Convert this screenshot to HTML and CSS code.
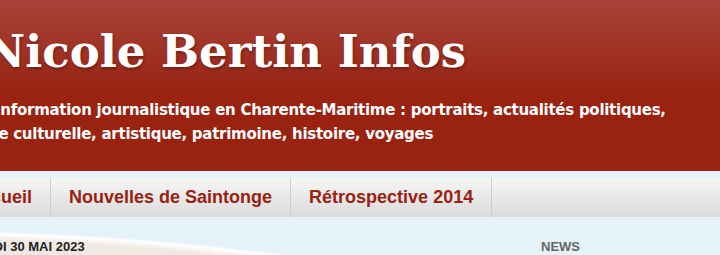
FILE: index.html
```html
<!DOCTYPE html>
<html lang="fr">
<head>
  <meta charset="UTF-8">
  <title>Nicole Bertin Infos</title>
  <link rel="stylesheet" href="styles.css">
</head>
<body>

<div class="page">
  <header class="header">
    <div class="header-inner">
      <h1 class="title">Nicole Bertin Infos</h1>
      <p class="description">Information journalistique en Charente-Maritime : portraits, actualités politiques, vie culturelle, artistique, patrimoine, histoire, voyages</p>
    </div>
  </header>

  <nav class="tabs">
    <ul class="tabs-inner">
      <li><a href="#">Accueil</a></li>
      <li><a href="#">Nouvelles de Saintonge</a></li>
      <li><a href="#">Rétrospective 2014</a></li>
    </ul>
  </nav>

  <div class="content">
    <div class="main">
      <h2 class="date-header">mardi 30 mai 2023</h2>
    </div>
    <aside class="sidebar">
      <h2 class="widget-title">News</h2>
    </aside>
  </div>
</div>

</body>
</html>
```

FILE: styles.css
```css
html, body {
  margin: 0;
}

body {
  background: radial-gradient(ellipse 760px 175px at -100px 405px, #e8e0d9 0, #efe9e4 95%, #ffffff 98.6%, rgba(255, 255, 255, 0) 100%) no-repeat, #e5f2f8;
  font-family: "Liberation Sans", Arial, sans-serif;
  overflow: hidden;
}

.page {
  margin-left: -50px;
  width: 1000px;
}

.header {
  height: 171px;
  background: linear-gradient(to bottom, #a8443a 0, #992211 95px, #992211 100%);
}

.header-inner {
  padding: 24px 0 0 34px;
}

.title {
  margin: 0;
  font-family: "DejaVu Serif", serif;
  font-size: 45px;
  line-height: 56px;
  font-weight: bold;
  color: white;
  text-shadow: 1px 2px 3px rgba(0, 0, 0, 0.3);
}

.description {
  margin: 18px 0 0;
  width: 695px;
  font-family: "DejaVu Sans", Verdana, sans-serif;
  font-size: 15px;
  line-height: 24px;
  font-weight: bold;
  letter-spacing: -0.27px;
  text-indent: 11px;
  color: white;
}

.tabs {
  margin-top: 7px;
  background: linear-gradient(to bottom, #f5f5f5, #dcdcdc);
}

.tabs-inner {
  display: flex;
  margin: 0;
  padding: 0;
  list-style: none;
}

.tabs-inner li a {
  display: block;
  padding: 0 18px;
  border-right: 1px solid #cccccc;
  line-height: 39px;
  font-size: 18px;
  font-weight: bold;
  color: #992211;
  text-decoration: none;
}

.content {
  display: flex;
}

.main {
  width: 591px;
  padding: 0 14px;
  box-sizing: border-box;
}

.date-header {
  margin: 22px 0 0;
  font-size: 13px;
  line-height: 16px;
  font-weight: bold;
  text-transform: uppercase;
  color: #222222;
}

.sidebar {
  flex: 1;
}

.widget-title {
  margin: 22px 0 0;
  font-size: 13px;
  line-height: 16px;
  font-weight: bold;
  text-transform: uppercase;
  color: #666666;
}
```
